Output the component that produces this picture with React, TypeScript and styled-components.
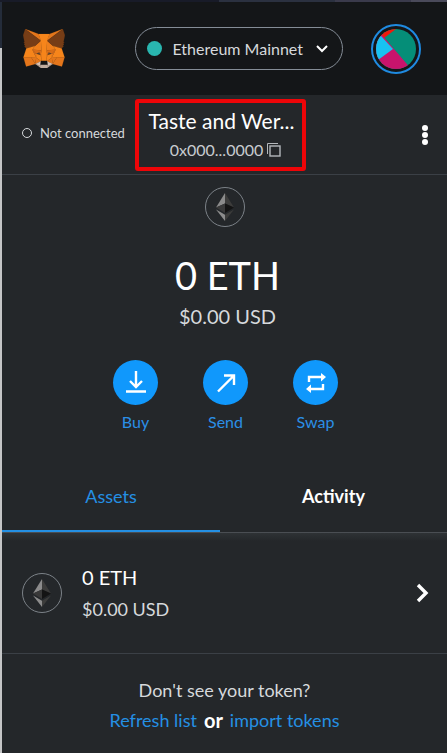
import React from "react";
import styled, { createGlobalStyle } from "styled-components";

const GlobalStyle = createGlobalStyle`
  *, *::before, *::after { box-sizing: border-box; }
  body { margin: 0; background: #24272a; }
  button { font: inherit; color: inherit; background: none; border: 0; padding: 0; cursor: pointer; }
  svg { display: block; }
`;

const Page = styled.div`
  min-height: 100vh;
  display: grid;
  grid-template-columns: 2px 1fr;
  grid-template-rows: 2px 1fr;
  font-family: Lato, "Open Sans", sans-serif;
  color: #fff;
  background: #24272a;
`;

const TopEdge = styled.div`
  grid-column: 1 / -1;
  background: linear-gradient(90deg, #181b28 0 49%, #2b3140 49% 75%, #3a3a4b 75% 92%, #4a4a5a 92%);
`;

const SideEdge = styled.div`
  background: linear-gradient(#242c3a 0 46px, #c4c5c6 46px);
`;

const Wallet = styled.div`
  min-width: 0;
`;

const Header = styled.header`
  height: 93px;
  display: flex;
  align-items: center;
  padding: 0 26px 0 21px;
  background: #141618;
`;

const NetworkButton = styled.button`
  display: flex;
  align-items: center;
  height: 43px;
  margin-left: auto;
  margin-right: 28px;
  padding: 0 14px 0 11px;
  border: 1px solid #848c96;
  border-radius: 22px;
  font-size: 16px;
  line-height: 24px;
  color: #d6d9dc;
  white-space: nowrap;
`;

const NetworkDot = styled.span`
  width: 15px;
  height: 15px;
  border-radius: 50%;
  margin-right: 10px;
  background: #29b6af;
`;

const NetworkName = styled.span`
  margin-right: 13px;
`;

const AvatarButton = styled.button`
  width: 50px;
  height: 50px;
  display: grid;
  place-items: center;
  border: 2px solid #1f8ae0;
  border-radius: 50%;
`;

const AccountBar = styled.section`
  height: 80px;
  display: flex;
  align-items: center;
  padding: 0 18px 0 20px;
  border-bottom: 1px solid #3b4046;
`;

const Status = styled.button`
  display: flex;
  align-items: center;
  gap: 8px;
  width: 113px;
  padding-bottom: 3px;
  font-size: 13px;
  line-height: 18px;
  color: #d6d9dc;
  white-space: nowrap;
`;

const StatusRing = styled.span`
  width: 10px;
  height: 10px;
  border: 1px solid #d6d9dc;
  border-radius: 50%;
`;

const AccountButton = styled.button`
  width: 171px;
  height: 72px;
  display: flex;
  flex-direction: column;
  align-items: center;
  padding: 4px 0 0 2px;
  border: 4px solid #ee0508;
  border-radius: 3px;
`;

const AccountName = styled.span`
  font-size: 21px;
  line-height: 28px;
  white-space: nowrap;
`;

const Address = styled.span`
  display: flex;
  align-items: center;
  gap: 4px;
  padding-left: 8px;
  font-size: 16px;
  line-height: 30px;
  color: #c8ccd0;
`;

const MenuButton = styled.button`
  width: 8px;
  margin-left: auto;
`;

const Overview = styled.section`
  display: flex;
  flex-direction: column;
  align-items: center;
  padding: 12px 0 30px;
`;

const TokenCircle = styled.span`
  width: 40px;
  height: 40px;
  flex: none;
  display: grid;
  place-items: center;
  border: 1px solid #7c8288;
  border-radius: 50%;
`;

const Balance = styled.h1`
  margin: 24px 0 0;
  padding-left: 6px;
  font-size: 38px;
  line-height: 48px;
  font-weight: 400;
`;

const Fiat = styled.p`
  margin: 3px 0 0;
  padding-left: 6px;
  font-size: 20px;
  line-height: 28px;
  color: #d6d9dc;
`;

const Actions = styled.div`
  display: grid;
  grid-template-columns: repeat(3, 90px);
  margin-top: 30px;
  padding-left: 2px;
`;

const ActionButton = styled.button`
  display: flex;
  flex-direction: column;
  align-items: center;
  gap: 5px;
  font-size: 16px;
  line-height: 24px;
  color: #2b8fe6;
`;

const ActionCircle = styled.span`
  width: 45px;
  height: 45px;
  display: grid;
  place-items: center;
  border-radius: 50%;
  background: #1098fc;
`;

const Tabs = styled.div`
  display: grid;
  grid-template-columns: 218fr 227fr;
  border-bottom: 1px solid #4a4e53;
`;

const Tab = styled.button<{ $active?: boolean }>`
  height: 68px;
  padding-bottom: 2px;
  font-size: 18px;
  line-height: 26px;
  font-weight: ${(p) => (p.$active ? 400 : 700)};
  color: ${(p) => (p.$active ? "#2490e4" : "#fff")};
  border-bottom: 2px solid ${(p) => (p.$active ? "#2490e4" : "transparent")};
`;

const AssetRow = styled.button`
  width: 100%;
  height: 121px;
  display: flex;
  align-items: center;
  padding: 0 18px 0 20px;
  text-align: left;
  border-bottom: 1px solid #3b4046;
  background: linear-gradient(#2e3235, #24272a 8px);
`;

const AssetText = styled.span`
  flex: 1;
  display: flex;
  flex-direction: column;
  padding-left: 20px;
`;

const AssetAmount = styled.span`
  font-size: 20px;
  line-height: 32px;
`;

const AssetFiat = styled.span`
  font-size: 18px;
  line-height: 32px;
  color: #d6d9dc;
`;

const Footer = styled.footer`
  padding: 21px 0 16px;
  text-align: center;
  font-size: 18px;
  line-height: 30px;
`;

const Hint = styled.p`
  margin: 0;
  color: #d6d9dc;
`;

const Choices = styled.p`
  display: flex;
  justify-content: center;
  gap: 7px;
  margin: 0;
  font-size: 18px;
`;

const Or = styled.span`
  font-size: 20px;
  font-weight: 700;
`;

const TextLink = styled.a`
  color: #2490e4;
  text-decoration: none;
`;

const foxShapes: [string, string][] = [
  ["#e2761b", "274.1,35.5 174.6,109.4 193,65.8"],
  ["#e4761b", "44.4,35.5 143.1,110.1 125.6,65.8"],
  ["#e4761b", "238.3,206.8 211.8,247.4 268.5,263 284.8,207.7"],
  ["#e4761b", "33.9,207.7 50.1,263 106.8,247.4 80.3,206.8"],
  ["#ee7f1c", "103.6,138.2 87.8,162.1 144.1,164.6 142.1,104.1"],
  ["#ee7f1c", "214.9,138.2 175.9,103.4 174.6,164.6 230.8,162.1"],
  ["#e4761b", "106.8,247.4 140.6,230.9 111.4,208.1"],
  ["#e4761b", "177.9,230.9 211.8,247.4 207.1,208.1"],
  ["#d7c1b3", "211.8,247.4 177.9,230.9 180.6,253 180.3,262.3"],
  ["#d7c1b3", "106.8,247.4 138.3,262.3 138.1,253 140.6,230.9"],
  ["#5b4636", "138.8,190 112,183 130.5,174"],
  ["#5b4636", "179.7,190 188,174 207,183"],
  ["#e4761b", "106.8,247.4 111.6,206.8 80.3,207.7"],
  ["#e4761b", "207,206.8 211.8,247.4 238.3,207.7"],
  ["#d96d18", "230.8,162.1 174.6,164.6 179.8,193.5 188.1,176.1 208.1,185.2"],
  ["#d96d18", "110.6,185.2 130.6,176.1 138.8,193.5 144.1,164.6 87.8,162.1"],
  ["#e4751f", "87.8,162.1 111.4,208.1 110.6,185.2"],
  ["#e4751f", "208.1,185.2 207.1,208.1 230.8,162.1"],
  ["#ee7f1c", "144.1,164.6 138.8,193.5 145.4,227.6 146.9,182.7"],
  ["#ee7f1c", "174.6,164.6 171.9,182.6 173.1,227.6 179.8,193.5"],
  ["#f6851b", "179.8,193.5 173.1,227.6 177.9,230.9 207.1,208.1 208.1,185.2"],
  ["#f6851b", "110.6,185.2 111.4,208.1 140.6,230.9 145.4,227.6 138.8,193.5"],
  ["#c0ad9e", "180.3,262.3 180.6,253 178.1,250.8 140.4,250.8 138.1,253 138.3,262.3 106.8,247.4 117.8,256.4 140.1,271.9 178.4,271.9 200.8,256.4 211.8,247.4"],
  ["#161616", "177.9,230.9 173.1,227.6 145.4,227.6 140.6,230.9 138.1,253 140.4,250.8 178.1,250.8 180.6,253"],
  ["#763d16", "278.3,114.2 286.8,73.4 274.1,35.5 177.9,106.9 214.9,138.2 267.2,153.5 278.8,140 273.8,136.4 281.8,129.1 275.6,124.3 283.6,118.2"],
  ["#763d16", "31.8,73.4 40.3,114.2 34.9,118.2 42.9,124.3 36.8,129.1 44.8,136.4 39.8,140 51.3,153.5 103.6,138.2 140.6,106.9 44.4,35.5"],
  ["#f6851b", "267.2,153.5 214.9,138.2 230.8,162.1 207.1,208.1 238.3,207.7 284.8,207.7"],
  ["#f6851b", "103.6,138.2 51.3,153.5 33.9,207.7 80.3,207.7 111.4,208.1 87.8,162.1"],
  ["#f6851b", "174.6,164.6 177.9,106.9 193.1,65.8 125.6,65.8 140.6,106.9 144.1,164.6 145.3,182.8 145.4,227.6 173.1,227.6 173.3,182.8"],
];

const FoxLogo = () => (
  <svg width="42" height="39" viewBox="31 35 256.5 237.5" preserveAspectRatio="none" role="img" aria-label="MetaMask">
    {foxShapes.map(([fill, points], i) => (
      <polygon key={i} fill={fill} stroke={fill} strokeWidth="1" points={points} />
    ))}
  </svg>
);

const Jazzicon = () => (
  <svg width="40" height="40" viewBox="0 0 40 40" aria-hidden="true">
    <defs>
      <clipPath id="avatar"><circle cx="20" cy="20" r="20" /></clipPath>
    </defs>
    <g clipPath="url(#avatar)">
      <rect width="40" height="40" fill="#058e78" />
      <path d="M0 0H20L8 9L0 9Z" fill="#f2180c" />
      <path d="M6 6L36 41H-4V10Z" fill="#c8146c" />
      <path d="M5 7L17 20L-2 34V7Z" fill="#18c2f2" />
    </g>
  </svg>
);

const EthLogo = () => (
  <svg width="18" height="28" viewBox="0 0 18 28" aria-hidden="true">
    <path d="M9 0L0 14.5L9 10.5Z" fill="#8b8b8b" />
    <path d="M9 0V10.5L18 14.5Z" fill="#3c3c3b" />
    <path d="M0 14.5L9 10.5V20Z" fill="#393939" />
    <path d="M18 14.5L9 10.5V20Z" fill="#141414" />
    <path d="M0 16.5L9 21.8V28Z" fill="#8c8c8c" />
    <path d="M18 16.5L9 21.8V28Z" fill="#3c3c3b" />
  </svg>
);

const BuyIcon = () => (
  <svg width="20" height="24" viewBox="0 0 20 24" fill="none" stroke="#fff" strokeWidth="2.4" aria-hidden="true">
    <path d="M10 0V15M4 10L10 16L16 10M0 20.5H20" />
  </svg>
);

const SendIcon = () => (
  <svg width="20" height="20" viewBox="0 0 20 20" fill="none" stroke="#fff" strokeWidth="2.4" aria-hidden="true">
    <path d="M2 18.5L17.5 3M8 2.5H18V12" />
  </svg>
);

const SwapIcon = () => (
  <svg width="20" height="20" viewBox="0 0 20 20" aria-hidden="true">
    <path d="M3 9V4H16M17 11V16H4" fill="none" stroke="#fff" strokeWidth="2.4" />
    <path d="M15 0L20 4L15 8.5ZM5 11.5L0 16L5 20Z" fill="#fff" />
  </svg>
);

const actions = [
  { label: "Buy", icon: <BuyIcon /> },
  { label: "Send", icon: <SendIcon /> },
  { label: "Swap", icon: <SwapIcon /> },
];

export default function App() {
  return (
    <Page>
      <GlobalStyle />
      <TopEdge />
      <SideEdge />
      <Wallet>
        <Header>
          <FoxLogo />
          <NetworkButton>
            <NetworkDot />
            <NetworkName>Ethereum Mainnet</NetworkName>
            <svg width="12" height="8" viewBox="0 0 12 8" fill="none" stroke="#fff" strokeWidth="2" aria-hidden="true">
              <path d="M1 1L6 6L11 1" />
            </svg>
          </NetworkButton>
          <AvatarButton aria-label="Account menu">
            <Jazzicon />
          </AvatarButton>
        </Header>
        <AccountBar>
          <Status>
            <StatusRing />
            Not connected
          </Status>
          <AccountButton>
            <AccountName>Taste and Wer...</AccountName>
            <Address>
              0x000...0000
              <svg width="14" height="14" viewBox="0 0 14 14" fill="none" stroke="#b4b8bc" aria-hidden="true">
                <path d="M0.5 11V0.5H11" />
                <rect x="3" y="3" width="10" height="10" strokeWidth="1.4" />
              </svg>
            </Address>
          </AccountButton>
          <MenuButton aria-label="Account options">
            <svg width="8" height="20" viewBox="0 0 8 20" fill="#fff" aria-hidden="true">
              <circle cx="4" cy="3" r="3" />
              <circle cx="4" cy="10" r="3" />
              <circle cx="4" cy="17" r="3" />
            </svg>
          </MenuButton>
        </AccountBar>
        <Overview>
          <TokenCircle><EthLogo /></TokenCircle>
          <Balance>0 ETH</Balance>
          <Fiat>$0.00 USD</Fiat>
          <Actions>
            {actions.map((a) => (
              <ActionButton key={a.label}>
                <ActionCircle>{a.icon}</ActionCircle>
                {a.label}
              </ActionButton>
            ))}
          </Actions>
        </Overview>
        <Tabs role="tablist">
          <Tab $active role="tab" aria-selected="true">Assets</Tab>
          <Tab role="tab" aria-selected="false">Activity</Tab>
        </Tabs>
        <AssetRow>
          <TokenCircle><EthLogo /></TokenCircle>
          <AssetText>
            <AssetAmount>0 ETH</AssetAmount>
            <AssetFiat>$0.00 USD</AssetFiat>
          </AssetText>
          <svg width="14" height="20" viewBox="0 0 14 20" fill="none" stroke="#fff" strokeWidth="3.4" aria-hidden="true">
            <path d="M3 2L11 10L3 18" />
          </svg>
        </AssetRow>
        <Footer>
          <Hint>Don't see your token?</Hint>
          <Choices>
            <TextLink href="#refresh">Refresh list</TextLink>
            <Or>or</Or>
            <TextLink href="#import">import tokens</TextLink>
          </Choices>
        </Footer>
      </Wallet>
    </Page>
  );
}
